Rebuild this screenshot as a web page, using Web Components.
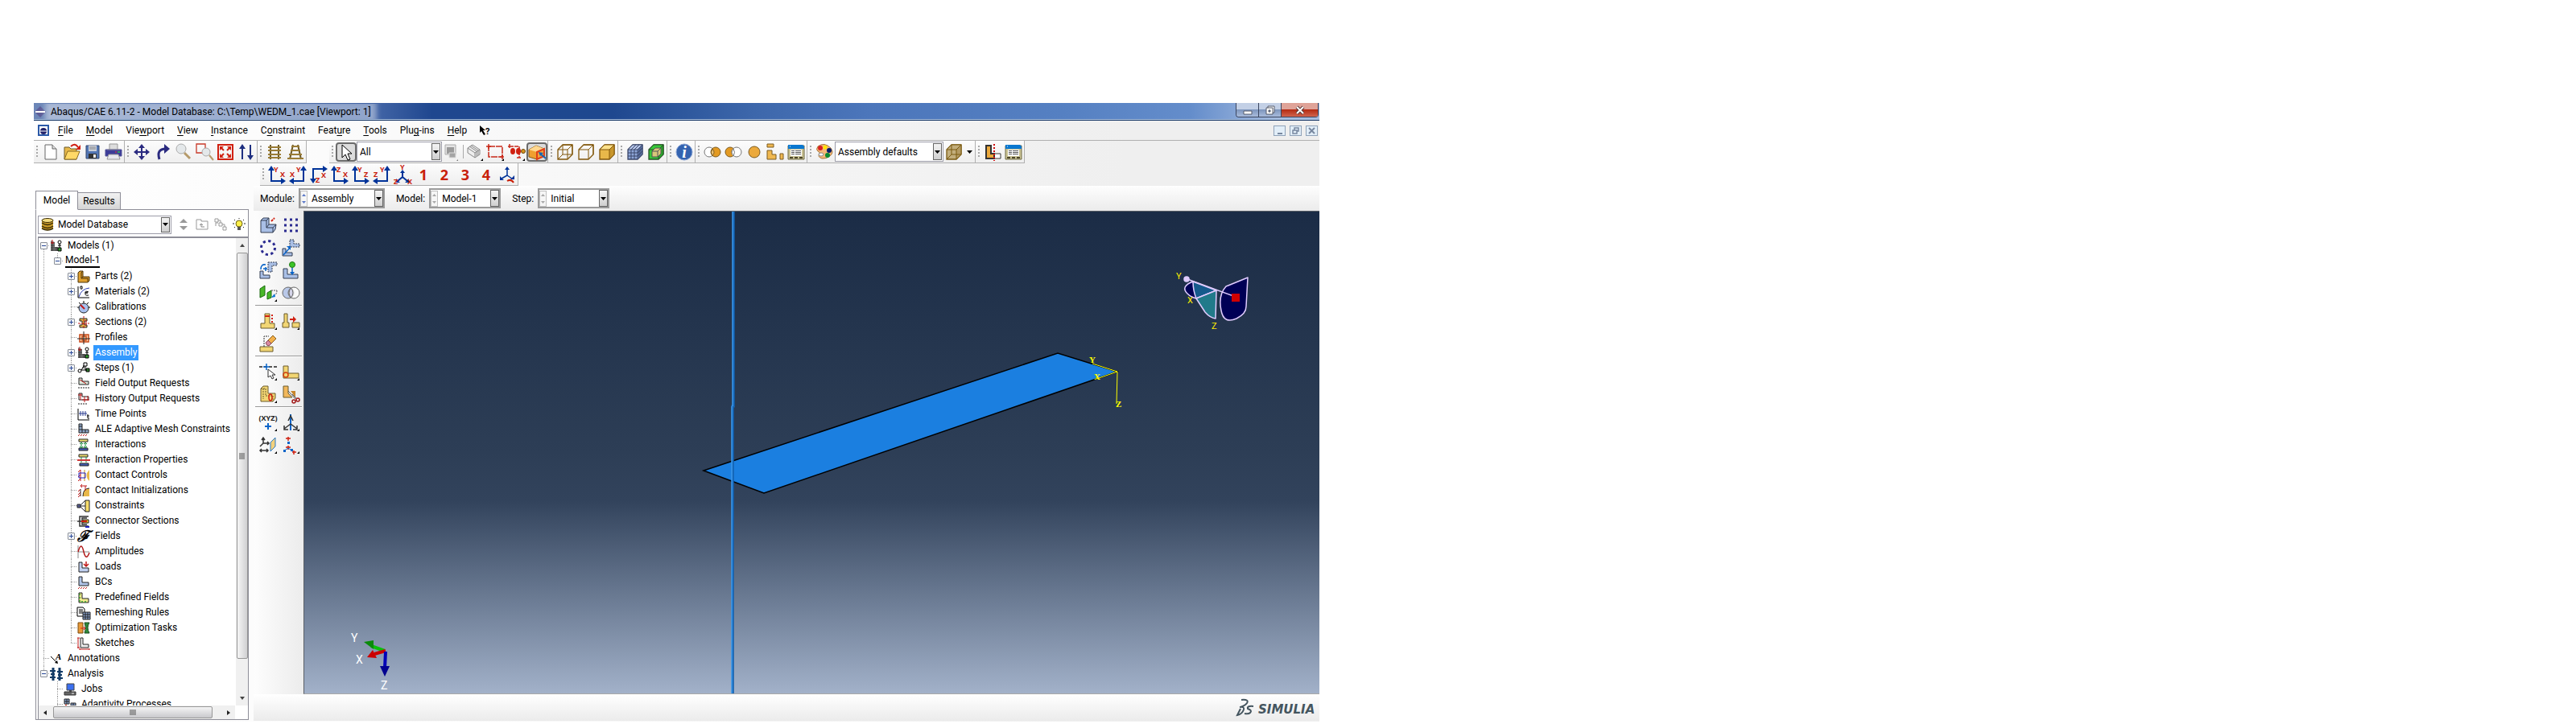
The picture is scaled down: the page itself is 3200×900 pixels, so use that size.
<!DOCTYPE html>
<html lang="en">
<head>
<meta charset="utf-8">
<title>Abaqus/CAE 6.11-2</title>
<style>
  body {
    margin: 0;
    padding: 128px 0 0 42px;
    box-sizing: border-box;
    height: 100vh;
    overflow: hidden;
    background: #fff;
    color: #000;
    font: 12px/16px Roboto, "Open Sans", sans-serif;
  }
</style>
</head>
<body>
<app-window></app-window>

<script>
// ---------- icon shapes ----------
const L_BLUE = 'fill="#a9bfe6" stroke="#333c50"';
const L_GOLD = 'fill="#f2d674" stroke="#6b5a2a"';
const MORE = '<path d="M22 19v3h-3z" fill="#000"/>';

const axes = (frame, head1, head2, a, ax, ay, b, bx, by) => `
  <path d="${frame}" fill="none" stroke="#003399" stroke-width="2"/>
  <path d="${head1}${head2}" fill="#003399"/>
  <text x="${ax}" y="${ay}" class="ax">${a}</text><text x="${bx}" y="${by}" class="ax">${b}</text>`;
const axesL = (a, b) => axes('M4 4v15h13', 'M0 6l4-6 4 6z', 'M16 15l6 4-6 4z', a, 7, 8, b, 15, 14);
const axesR = (a, b) => axes('M18 4v15H5', 'M14 6l4-6 4 6z', 'M6 15l-6 4 6 4z', a, 9, 8, b, 1, 14);
const digit = n => `<text x="11" y="18" text-anchor="middle" font-size="18" font-weight="700" fill="#c8200a">${n}</text>`;
const cube = (front, top, side, line, inner) => `
  <path d="M2 8l6-6h12v12l-6 6H2z" fill="${front}" stroke="${line}" stroke-width="1.3"/>
  <path d="M2 8l6-6h12l-6 6z" fill="${top}" stroke="${line}"/><path d="M14 8l6-6v12l-6 6z" fill="${side}" stroke="${line}"/>
  ${inner ? `<path d="M8 2v12h12M8 14l-6 6" fill="none" stroke="${line}"/>` : ''}`;
const assembly = `<path d="M1 1v13h9V9H6V3z" fill="#777"/><path d="M1 4h5M1 7h5M1 10h9M1 13h9M3 3v11M8 9v5" stroke="#222" stroke-width=".6"/>
  <path d="M3 0v5M1 3l2 2 2-2" stroke="#c01818" fill="none"/><circle cx="12" cy="3" r="2" fill="#fff" stroke="#000"/><path d="M12 5v5M10 7h4" stroke="#000"/><path d="M10 10h4v4h-4z" fill="#2e9a2e" stroke="#000"/>`;
const lShape = (fill, extra = '') => `<path d="M2 2h4v7h8v5H2z" fill="${fill}" stroke="#222"/>${extra}`;
const hatch = '<path d="M1 16l2-2M4 16l2-2M7 16l2-2M10 16l2-2" stroke="#c01818"/>';

const ICONS = {
  new: '<path d="M4 2h9l5 5v13H4z" fill="#fff" stroke="#666"/><path d="M13 2v5h5" fill="#ddd" stroke="#666"/>',
  open: '<path d="M2 20V5h6l2 2h7v13z" fill="#e8b94a" stroke="#6b5a2a"/><path d="M2 20l4-10h15l-4 10z" fill="#ffd967" stroke="#8a6a20"/><path d="M10 4q5-5 9 1" fill="none" stroke="#d01c10" stroke-width="2"/><path d="M22 2v6h-6z" fill="#d01c10"/>',
  save: '<path d="M3 3h16v16H3z" fill="#5276b4" stroke="#33476e"/><path d="M6 3h10v7H6z" fill="#c9ced8"/><path d="M7 5h8M7 7h8" stroke="#888"/><path d="M6 13h10v6H6z" fill="#333"/><path d="M12 14h3v4h-3z" fill="#eee"/>',
  print: '<path d="M6 1h10v8H6z" fill="#ddd" stroke="#999"/><path d="M1 8h20v8H1z" fill="#3c3c98" stroke="#55559a"/><path d="M3 8h16" stroke="#889"/><path d="M5 14h12l2 6H3z" fill="#e8e8ee" stroke="#999"/><path d="M16 11h3" stroke="#3f3"/><path d="M13 11h2" stroke="#f33"/>',
  pan: '<path d="M11 3v16M3 11h16" stroke="#2b2b80" stroke-width="2"/><path d="M11 1l4 5H7zM11 21l4-5H7zM1 11l5-4v8zM21 11l-5-4v8z" fill="#2b2b80"/>',
  rotate: '<path d="M7 20q-4-13 8-13" fill="none" stroke="#2b2b80" stroke-width="3"/><path d="M13 1l7 6-7 6z" fill="#2b2b80"/>',
  magnify: '<path d="M12 12l7 7" stroke="#b59a6a" stroke-width="3"/><circle cx="8" cy="7" r="6" fill="#e4e8ea" stroke="#aaa"/>',
  zoombox: '<path d="M1 1h11v11H1z" fill="none" stroke="#c83a2a" stroke-width="1.3"/><path d="M17 15l5 6" stroke="#b59a6a" stroke-width="2"/><circle cx="13" cy="11" r="5" fill="#e4e8ea" stroke="#aaa"/>',
  fit: '<path d="M2 2h18v18H2z" fill="none" stroke="#d02010" stroke-width="2"/><path d="M4 4h5L4 9zM18 4v5l-5-5zM4 18v-5l5 5zM18 18h-5l5-5z" fill="#d02010"/><path d="M5 5l4 4M17 5l-4 4M5 17l4-4M17 17l-4-4" stroke="#d02010" stroke-width="2"/>',
  updown: '<path d="M6 20V4M16 2v16" stroke="#1e2f80" stroke-width="2"/><path d="M6 1l4 6H2zM16 21l4-6h-8z" fill="#1e2f80"/>',
  ladder: '<path d="M6 2v18M16 2v18" stroke="#6b5a2a" stroke-width="2"/><path d="M3 5h16M3 9h16M3 14h16M3 18h16" stroke="#9a7c35" stroke-width="2"/>',
  ladder2: '<path d="M8 2L4 20M14 2l4 18" stroke="#6b5a2a" stroke-width="2"/><path d="M6 4h10M5 9h12M3 14h16M1 19h20" stroke="#9a7c35" stroke-width="2"/>',
  pointer: '<path d="M6 2v16l4-4 3 7 3-1-3-7h5z" fill="#fff" stroke="#000"/>',
  copy: '<path d="M2 2h13v12H2z" fill="#e4e4e4" stroke="#aaa"/><path d="M4 5h9v8H4z" fill="#9a9a9a"/><path d="M7 12h8v6H7z" fill="#a4a4a4" stroke="#ddd"/><path d="M18 20v2h-2z" fill="#777"/>',
  stack: '<path d="M3 6l6-4 9 6v6l-6 4-9-6z" fill="#eee" stroke="#888"/><path d="M3 6l9 6 6-4M12 12v6M5 4l9 6v6M7 3l9 6v6" fill="none" stroke="#888"/>' + MORE,
  redrect: '<path d="M3 4h17v13H3z" fill="none" stroke="#c82818" stroke-width="1.5" stroke-dasharray="8 1"/><path d="M0 4h6M3 1v6M17 17h5M20 14v6" stroke="#c82818" stroke-width="1.5"/>' + MORE,
  reddots: '<path d="M1 4h5M3 1v6M3 4h12v14M12 18h6" stroke="#c82818" fill="none" stroke-width="1.5" stroke-dasharray="5 1"/><ellipse cx="7" cy="10" rx="3" ry="4" fill="#d02010"/><ellipse cx="14" cy="10" rx="3" ry="4" fill="#d02010"/><circle cx="20" cy="10" r="2.5" fill="#d9941c" stroke="#6b4a10"/>' + MORE,
  pickbox: '<path d="M1 8l9-5 10 4v9l-9 4-10-3z" fill="#f0a030" stroke="#8a5a10"/><path d="M1 8l10 3 9-4-10-4z" fill="#ffd890"/><path d="M11 11v9l9-4V7z" fill="#f6a13a" stroke="#e0401a" stroke-width="2"/><path d="M22 19l-7-6" stroke="#1565b5" stroke-width="2"/><path d="M13 11l6 1-4 4z" fill="#1565b5"/>',
  wire: cube('none', 'none', 'none', '#80560a', true),
  hidden: cube('none', 'none', 'none', '#80560a', false),
  shaded: cube('#e8b84a', '#fbe08a', '#c8962c', '#80560a', false),
  mesh: cube('#8ea6d8', '#b4c4e8', '#6d88c2', '#3a4668', false) + '<path d="M6 8v12M10 8v12M2 12h12l6-6M2 16h12l6-6M6 8l6-6M10 8l6-6M16 6v12M18 4v12" fill="none" stroke="#3a4668"/>',
  cutcube: cube('#38c838', '#38c838', '#2aa82a', '#245024', false) + '<path d="M6 10l4-4h7v7l-4 4H6z" fill="#d9c77a" stroke="#555"/><path d="M6 10h7v7M13 10l4-4" fill="none" stroke="#555"/>',
  info: '<circle cx="11" cy="11" r="10" fill="#3463b0" stroke="#8aa4d4"/><text x="11" y="18" text-anchor="middle" font-family="Liberation Serif, serif" font-style="italic" font-weight="700" font-size="20" fill="#fff">i</text>',
  both: '<circle cx="7" cy="11" r="6" fill="#fff" stroke="#777"/><circle cx="15" cy="11" r="6" fill="#e39a22" stroke="#7a5a20"/><path d="M11 7q4 4 0 9q-3-5 0-9" fill="#f6c978" stroke="#7a5a20"/>',
  left: '<circle cx="7" cy="11" r="6" fill="#e39a22" stroke="#7a5a20"/><circle cx="15" cy="11" r="6" fill="#fff" stroke="#777"/><path d="M11 7q3 4 0 9q-4-5 0-9" fill="#fff" stroke="#777"/>',
  single: '<circle cx="11" cy="11" r="7" fill="#eba93c" stroke="#7a5a20"/>',
  pieces: '<path d="M1 1h8v4H1zM1 9h6v5h5v6H1zM17 13h4v7h-4z" fill="#f0b850" stroke="#7a5a20"/>',
  table: '<path d="M1 3h20v17H1z" fill="#c9c294" stroke="#6f6a45"/><path d="M1 2h18l2 2v3H1z" fill="#0a78d0"/><path d="M3 4h1" stroke="#fff"/><path d="M4 8h14v8H4z" fill="#fff"/><path d="M5 9.5h4M10 9.5h7M5 11.5h4M10 11.5h7M5 13.5h4M10 13.5h7" stroke="#555"/><path d="M3 18h4M9 18h4M15 18h4" stroke="#4b4427" stroke-width="2"/>',
  palette: '<path d="M3 4q8-6 16 2q4 5 0 9q-5 5-11 4q-6-2-3-6q1-2-2-3q-3-2 0-6z" fill="#f4b878" stroke="#a8783c"/><circle cx="6" cy="6" r="3" fill="#d82020"/><circle cx="12" cy="5" r="2.5" fill="#ffe600"/><circle cx="17" cy="9" r="3" fill="#001a66"/><circle cx="15" cy="15" r="3" fill="#0a8a30"/><ellipse cx="7" cy="14" rx="3" ry="2" fill="#fff" stroke="#888"/>',
  tancube: cube('#c2ae7c', '#c2ae7c', '#b39a62', '#7a5a10', true),
  partline: '<path d="M3 3h6v10h12v6H3z" fill="#fff" stroke="#333"/><path d="M3 3h6v10h4v6H3z" fill="#eba93c" stroke="#333" stroke-width="2"/><path d="M13 1v21" stroke="#d01010" stroke-width="2" stroke-dasharray="2 2"/>',
  xy: axesL('Y', 'X'), xyr: axesR('Y', 'X'),
  xz: axes('M4 18V4h15', 'M0 16l4 6 4-6z', 'M16 0l6 4-6 4z', 'Z', 7, 21, 'X', 14, 15),
  zx: axesL('Z', 'X'), yz: axesL('Y', 'Z'), zyr: axesR('Y', 'Z'),
  iso: '<path d="M11 6v8l-6 5M11 14l6 5" fill="none" stroke="#003399" stroke-width="2"/><path d="M8 9l3-4 3 4zM3 16v5h5zM19 16v5h-5z" fill="#003399"/><text x="8" y="5" class="ax">Y</text><text x="0" y="23" class="ax">Z</text><text x="17" y="23" class="ax">X</text>',
  n1: digit(1), n2: digit(2), n3: digit(3), n4: digit(4),
  isoturn: '<path d="M11 3v9l-7 4M11 12l6 4" fill="none" stroke="#003399" stroke-width="1.5"/><path d="M8 5l3-4 3 4zM2 13v5h5zM20 12v5h-5z" fill="#003399"/><path d="M11 19q5-3 8 2" fill="none" stroke="#c8200a" stroke-width="2"/>',
  // module toolbox
  instance: `<path d="M2 5l3-3h7v8h9l-1 6-3 4H2z" ${L_BLUE}/><path d="M2 5h7v9h8v6M9 5l3-3M9 14l3-4M17 14l4-4" fill="none" stroke="#333c50"/><path d="M15 6l4-4" stroke="#d02010" stroke-width="2" stroke-dasharray="3 1"/>`,
  grid: '<path d="M3 4h17M3 11h17M3 18h17" stroke="#2b2b90" stroke-width="3" stroke-dasharray="3 4"/>',
  radial: '<circle cx="11" cy="11" r="8.5" fill="none" stroke="#2b2b90" stroke-width="3" stroke-dasharray="3.2 3.47"/>',
  translate: `<path d="M1 12h4v5h8v4H1z" ${L_BLUE}/><path d="M10 1h5v5h7v4H10z" fill="#a9bfe6" stroke="#333c50" stroke-dasharray="2 1"/><path d="M2 20l8-9" stroke="#0a64c8" stroke-width="1.5"/><path d="M11 9v5l-5-5z" fill="#0a64c8"/>`,
  turn: `<path d="M1 12h4v5h8v4H1z" ${L_BLUE}/><path d="M11 1h11v4h-6v8h-5z" fill="#a9bfe6" stroke="#333c50" stroke-dasharray="2 1"/><path d="M2 10q0-7 6-6M8 7v5M5 9h5" fill="none" stroke="#0a64c8" stroke-width="1.5"/>`,
  toinstance: `<path d="M2 9h5v7h13v5H2z" ${L_BLUE}/><circle cx="13" cy="4" r="3.5" fill="#3cc428" stroke="#207818"/><path d="M13 8v7" stroke="#0a64c8" stroke-width="1.5"/><path d="M10 13h6l-3 4z" fill="#0a64c8"/>`,
  parallel: '<path d="M1 6l6-4v12l-6 3z" fill="#48b828" stroke="#1c6a10"/><path d="M10 11l5-3v9l-5 2z" fill="#48b828" stroke="#1c6a10"/><path d="M15 8h7M22 8q0 6-6 8" fill="none" stroke="#555" stroke-dasharray="2 1"/><path d="M15 17l4-5 1 4z" fill="#0a78d8"/>' + MORE,
  merge: '<circle cx="8" cy="11" r="7" fill="#b9c8e8" stroke="#666"/><circle cx="15" cy="11" r="7" fill="#fff" fill-opacity=".7" stroke="#666"/><path d="M11.5 5q5 6 0 12q-5-6 0-12" fill="#d5d5ea" stroke="#666"/>',
  feature: `<path d="M7 2h6v12h6v6H2v-6h5z" ${L_GOLD}/><path d="M7 5h6" stroke="#d02010" stroke-width="2"/><path d="M16 3v11" stroke="#d02010" stroke-width="2" stroke-dasharray="2 2"/>` + MORE,
  split: `<path d="M3 2h4v11h2v6H1v-6h2zM13 13h9v6h-9z" ${L_GOLD}/><path d="M10 9h5" stroke="#d02010" stroke-width="2"/><path d="M14 5l4 4-4 4z" fill="#d02010"/>` + MORE,
  erase: `<path d="M1 15h16v6H1z" ${L_GOLD}/><path d="M6 15V2h6" fill="none" stroke="#333" stroke-dasharray="2 1"/><path d="M9 9l8-8 4 4-8 8z" fill="#f2b04c" stroke="#8a6020"/><path d="M8 10l3-3 4 4-3 3q-3 0-4-4z" fill="#d88aa0" stroke="#8a4a5a"/>`,
  datum: '<path d="M0 5h22" stroke="#222" stroke-width="1.5" stroke-dasharray="4 2"/><path d="M9 1v8M5 5h8" stroke="#0a64c8" stroke-width="1.5"/><path d="M11 8v10l3-2 2 4 2-1-2-4h4z" fill="#fff" stroke="#333"/>' + MORE,
  partition: `<path d="M2 4h6v9h13v6H2z" ${L_GOLD}/><circle cx="5" cy="15" r="3" fill="none" stroke="#d04010" stroke-width="1.5"/>` + MORE,
  partcell: `<path d="M2 4l3-3h6v9h9v6l-3 4H2z" ${L_GOLD}/><path d="M2 4h6v9h9v7M5 4v13" fill="none" stroke="#6b5a2a" stroke-dasharray="2 1"/><ellipse cx="14" cy="15" rx="2" ry="4" fill="none" stroke="#d02010" stroke-width="1.5"/>` + MORE,
  trim: `<path d="M2 1h6v9l5 5H2z" fill="#f2b85c" stroke="#6b5a2a"/><path d="M11 7h6v8z" fill="#c8862c"/><path d="M8 7l9 10M13 11l6 6" stroke="#555"/><circle cx="15" cy="20" r="2" fill="none" stroke="#a01818" stroke-width="1.5"/><circle cx="20" cy="18" r="2" fill="none" stroke="#a01818" stroke-width="1.5"/>`,
  xyz: '<text x="11" y="9" text-anchor="middle" font-size="9" font-weight="700" fill="#222">(XYZ)</text><path d="M11 12v8M7 16h8" stroke="#0a64c8" stroke-width="2"/>' + MORE,
  triad: '<path d="M11 1v20" stroke="#0a64c8" stroke-width="2"/><path d="M11 13l-8 6M11 13l8 6M8 9l3-6 3 6M3 15v5h5M19 15v5h-5" fill="none" stroke="#333" stroke-width="1.5"/>' + MORE,
  plane: '<path d="M5 3v6h7M5 9l-4 4M3 5l2-3 2 3M10 7l2 2-2 2M1 18h10M3 16l-2 2 2 2M9 16l2 2-2 2" fill="none" stroke="#333" stroke-width="1.5"/><path d="M14 8l6-6v11l-6 6z" fill="#f2d07c" stroke="#2a7ac8"/>' + MORE,
  points: '<path d="M8 1v5M5 3h6M8 12v5M5 14h6M15 18v5M13 20h5" stroke="#d02010" stroke-width="1.5"/><path d="M7 7h3v3H7zM2 17h3v3H2zM11 16h3v3h-3z" fill="#0a64c8"/><path d="M8 15l-6 4M8 15l6 4" stroke="#0a64c8"/>' + MORE,
};

// tree icons sit on a 16 px grid
const TREE_ICONS = {
  models: assembly, assembly,
  parts: '<path d="M1 3l2-2h4v7h8v5l-2 2H1z" fill="#dfa030" stroke="#4a3208"/><path d="M5 3v7h8v4M5 3l2-2M5 10l2-2" fill="none" stroke="#4a3208"/>',
  materials: '<path d="M1 1v14h14" fill="none" stroke="#000"/><path d="M2 14q3-10 13-11" fill="none" stroke="#2a3cb0"/><path d="M6 1H4q-1 4 2 3z" fill="none" stroke="#000"/><path d="M14 8q-5-2-4 1h3h-3q-1 4 4 3" fill="none" stroke="#000"/>',
  calibrations: '<path d="M8 0v3M0 8h3M13 8h3M2 2l2 2M14 2l-2 2" stroke="#000"/><circle cx="8" cy="9" r="6" fill="#a8c0ee" stroke="#222"/><path d="M4 5l5 5" stroke="#c01818" stroke-width="2"/>',
  sections: '<path d="M3 3h9v3H9v5h3v3H3v-3h3V6H3z" fill="#e8b84a" stroke="#222"/><path d="M8 0v16M1 9h14M11 5v8" stroke="#c01818" stroke-dasharray="3 1"/>',
  profiles: '<path d="M3 4h11v9H3zM6 6h5v5H6z" fill="#ffd8b0" stroke="#c84818" stroke-width="1.5"/><path d="M8 0v16M0 9h16" stroke="#222"/>',
  steps: '<path d="M5 10h6M8 8V4" stroke="#000"/><circle cx="3" cy="11" r="2" fill="#fff" stroke="#000"/><path d="M8 1h4v4H8z" fill="#fff" stroke="#000"/><path d="M11 8h4v4h-4z" fill="#2e7a2e" stroke="#000"/><path d="M5 10l3-5M10 5v5h2" fill="none" stroke="#000"/>',
  fieldout: '<path d="M2 1v8h12V5H6V1z" fill="#dce8dc" stroke="#222"/><path d="M3 3l8 5" stroke="#c01818"/><path d="M2 12v3M5 12v3M8 12v3M11 12v3M14 12v3" stroke="#222" stroke-dasharray="2 1"/>',
  histout: '<path d="M2 1v8h12V5H6V1z" fill="#fff" stroke="#222"/><path d="M1 3h5M4 1v8M9 5v7M6 9h9M13 4v6" stroke="#c01818"/><path d="M2 13v3M5 13v3M8 13v3M11 13v3" stroke="#222" stroke-dasharray="2 1"/>',
  time: '<path d="M1 1v14h14" fill="none" stroke="#000"/><path d="M2 7h10M4 4v6M7 4v6M10 4v6" stroke="#2a3c90"/><path d="M13 8v5h2M12 10h3" fill="none" stroke="#000"/>',
  ale: '<path d="M2 1h4v7h8v4H2z" fill="#8ea6c8" stroke="#222"/><path d="M2 4h4M2 8h4M6 8v4M10 8v4" stroke="#222"/>' + hatch,
  interactions: '<path d="M2 1h11v3H2z" fill="#f2e070" stroke="#222"/><path d="M2 12h11v3H2z" fill="#445cb0" stroke="#222"/><path d="M5 5v6M10 5v6M3 7l2-2 2 2M8 7l2-2 2 2M3 10l2 2 2-2M8 10l2 2 2-2" fill="none" stroke="#1a8a3a"/>',
  intprops: '<path d="M2 1h11v3H2z" fill="#f2e070" stroke="#222"/><path d="M3 12h11v3H3z" fill="#445cb0" stroke="#222"/><path d="M5 4v7M11 4v7" stroke="#1a8a3a"/><path d="M0 8h16" stroke="#d03838" stroke-width="2"/>',
  ctrl: '<path d="M15 1q-7 7 0 14z" fill="#e8b84a"/><path d="M9 1v14" stroke="#c89020"/><path d="M1 4l3-3M1 10l3-3M1 15l3-3M4 1v14" stroke="#c01818"/><path d="M2 5h8v6H2z" fill="none" stroke="#2020c0"/>',
  init: '<path d="M15 5q-8 0-8 10h8z" fill="#e8b84a"/><path d="M15 5q-8 0-8 10" fill="none" stroke="#222"/><path d="M4 6v9" stroke="#222"/><path d="M1 9l3-3M1 13l3-3M1 16l3-3M4 2h8M6 0L4 2l2 2M10 2v6" fill="none" stroke="#c01818"/>',
  constraints: '<path d="M10 1h5v14h-5z" fill="#f6dc6a" stroke="#222"/><path d="M3 8l7-7M3 8l7 7M3 8h7" stroke="#222"/><path d="M0 6h4v4H0z" fill="#555c90" stroke="#222"/>',
  connector: '<path d="M14 2H3v12h11M0 8h5M12 4H6v8h6" fill="none" stroke="#333" stroke-width="1.5"/><path d="M7 6h7v4H7z" fill="#e8c030" stroke="#222"/><path d="M5 8h7" stroke="#d02010" stroke-width="2"/><path d="M10 15h5" stroke="#2020c0" stroke-width="2"/>',
  fields: '<text x="8" y="14" text-anchor="middle" font-family="Liberation Serif, serif" font-style="italic" font-weight="700" font-size="19">ℱ</text>',
  amplitudes: '<path d="M1 0v16M1 8h14" stroke="#888"/><path d="M1 8q4-14 7 0q3 12 7 1" fill="none" stroke="#b01818" stroke-width="1.5"/>',
  loads: lShape('#c0d0f0', '<path d="M11 1v6M8 4l3 3 3-3" fill="none" stroke="#c01818" stroke-width="1.5"/>'),
  bcs: '<path d="M2 1h4v7h8v4H2z" fill="#b0c4e8" stroke="#222"/>' + hatch,
  predefined: lShape('#f2ea90', '<path d="M3 3v10h10" fill="none" stroke="#2e9a2e" stroke-width="1.5" stroke-dasharray="2 2"/>'),
  remesh: '<path d="M0 1h7l2 2v9H0z" fill="#fff" stroke="#000"/><path d="M2 4h5M2 6h5M2 8h5" stroke="#000"/><path d="M7 7h9v9H7z" fill="#8aa4d0" stroke="#222"/><path d="M10 7v9M13 7v9M7 10h9M7 13h9" stroke="#222"/>',
  optimize: '<path d="M1 1h6v13H1z" fill="#e89a38" stroke="#7a4a10"/><path d="M9 1h6q-4 6 0 13H9q3-6 0-13z" fill="#2e8a3a" stroke="#184a20"/><path d="M4 8h6M8 6l2 2-2 2" stroke="#d02010" fill="none"/>',
  sketches: '<path d="M4 1h3v8h7v4H4z" fill="#eee" stroke="#222"/><path d="M1 1v13M0 1h3M0 13h3M3 15h12M3 14v2M15 14v2" stroke="#c01818"/>',
  annotations: '<path d="M1 5l8 8" stroke="#000"/><path d="M10 14l-4-1 3-3z"/><text x="7" y="9" font-family="Liberation Serif, serif" font-style="italic" font-weight="700" font-size="11">A</text>',
  analysis: '<path d="M0 4h7M0 12h7M9 5h7M9 13h7" stroke="#123a66" stroke-width="2"/><path d="M4 0v16M12 0v16" stroke="#123a66" stroke-width="3"/><path d="M1 8h5M10 9h5" stroke="#123a66" stroke-width="2"/>',
  jobs: '<path d="M4 1h9v8H4z" fill="#3c70f0" stroke="#444"/><path d="M1 11h14v4H1z" fill="#666" stroke="#333"/><path d="M7 9h3v2H7z" fill="#444"/><path d="M10 13h3" stroke="#eee"/>',
  adaptivity: '<path d="M1 1h6v6H1zM9 6h6v6H9z" fill="#8aa4d0" stroke="#222"/><path d="M4 1v6M1 4h6M12 6v6M9 9h6" stroke="#222"/><path d="M3 8v6" stroke="#d02010" stroke-width="2"/>',
};

function define(name, html) {
  const tpl = document.createElement('template');
  customElements.define(name, class extends HTMLElement {
    connectedCallback() {
      if (this.shadowRoot) return;
      tpl.innerHTML = typeof html === 'function' ? html(this) : html;
      this.attachShadow({ mode: 'open' }).appendChild(tpl.content.cloneNode(true));
    }
  });
}

define('tool-button', el => {
  const name = el.getAttribute('icon');
  return `
  <style>
    :host { display: block; flex: 0 0 26px; }
    :host([cell]) { flex-basis: 28px; }
    button { display: flex; align-items: center; justify-content: center; box-sizing: border-box; width: 100%; height: 26px; margin: 0; padding: 0; border: 0; background: none; }
    :host([cell]) button { height: 28px; }
    :host([pressed]) button { border: 2px solid #6b6b6b; border-radius: 4px; background: #dcdcdc; height: 24px; }
    svg { flex: none; width: 22px; height: 22px; overflow: visible; font-family: "Open Sans", sans-serif; }
    .ax { fill: #c8200a; font-size: 9px; font-weight: 700; }
  </style>
  <button type="button" aria-label="${name}" aria-pressed="${el.hasAttribute('pressed')}"><svg viewBox="0 0 22 22">${ICONS[name]}</svg></button>`;
});

define('tool-group', `
  <style>
    :host { display: flex; align-items: center; height: 27px; border-right: 1px solid #b0b0b0; border-bottom: 1px solid #b0b0b0; background: linear-gradient(#fcfcfc, #efefef); }
    .grip { flex: 0 0 8px; height: 15px; background: repeating-linear-gradient(#a8a8a8 0 2px, transparent 2px 4px) 3px 0 / 2px 100% no-repeat; }
  </style>
  <span class="grip"></span><slot></slot>`);

define('combo-box', el => `
  <style>
    :host { display: flex; box-sizing: border-box; align-items: center; height: 25px; border: 1px solid #9c9ca8; background: #fff; padding: 1px; gap: 3px; }
    :host([framed]) { border: 2px solid #9a9a9a; padding: 0; }
    .field { flex: 1; display: flex; min-width: 0; height: 100%; }
    select { flex: 1; min-width: 0; height: 100%; padding: 0 12px 0 2px; border: 0; appearance: none; background: transparent; font: inherit; color: #000; outline: 0; }
    .drop { flex: 0 0 9px; margin-left: -11px; border: 1px solid #666; background: linear-gradient(#f4f4f4, #cfcfcf); display: flex; align-items: center; justify-content: center; pointer-events: none; }
    .spin { flex: 0 0 7px; height: 18px; border: 1px solid #c0c0c0; display: flex; flex-direction: column; justify-content: space-around; align-items: center; background: #f6f6f6; color: #a8a8a8; }
    .spin[data-on] { color: #5a78c8; }
    svg { display: block; }
    .db { margin-left: 2px; flex: none; }
  </style>
  ${el.hasAttribute('spin') ? `<span class="spin" ${el.getAttribute('spin') ? 'data-on' : ''}>
    <svg width="5" height="3"><path d="M0 3h5L2.5 0z" fill="currentColor"/></svg><svg width="5" height="3"><path d="M0 0h5L2.5 3z" fill="currentColor"/></svg></span>` : ''}
  ${el.hasAttribute('db') ? `<svg class="db" width="16" height="16" viewBox="0 0 16 16"><path d="M1 3v10q7 5 14 0V3z" fill="#c89a28"/><path d="M1 6q7 5 14 0M1 10q7 5 14 0M1 13q7 4 14 0" fill="none" stroke="#3a2c08" stroke-width="1.5"/><ellipse cx="8" cy="3" rx="7" ry="2.5" fill="#f4dc80" stroke="#3a2c08"/></svg>` : ''}
  <span class="field"><select aria-label="${el.getAttribute('label')}"><option>${el.getAttribute('value')}</option></select>
  <span class="drop"><svg width="7" height="4"><path d="M0 0h7L3.5 4z"/></svg></span></span>`);

define('title-bar', `
  <style>
    :host { display: flex; align-items: flex-start; height: 21px; border-bottom: 1px solid #1b3a68; box-shadow: inset 0 -1px #a9c0de;
      background: linear-gradient(90deg, #6d87b8 0, #5d7ab2 10%, #3f62a4 27%, #1f478f 31%, #1f488f 45%, #3d67ab 56%, #4c76bb 65%, #5580c2 80%, #648dcb 90%, #a7bde0 97%); }
    .logo { flex: none; margin: 4px 0 0 1px; }
    h1 { margin: 3px auto 0 4px; padding: 0 2px; font-size: 12px; font-weight: 400; line-height: 16px; white-space: nowrap; background: rgba(255,255,255,.42); box-shadow: 0 0 6px 5px rgba(255,255,255,.42); clip-path: inset(-2px -12px -1px -12px); }
    .ctl { display: flex; height: 17px; border: 1px solid #3b4660; border-top: 0; border-right: 0; border-radius: 0 0 4px 4px; overflow: hidden; margin-right: 1px; }
    button { display: flex; align-items: center; justify-content: center; width: 28px; padding: 0; border: 0; border-right: 1px solid #3b4660; background: linear-gradient(#c3d0e6 0 45%, #7e96bd 50%, #a9bcdc); }
    .close { width: 46px; background: linear-gradient(#dfa398 0 45%, #b52c14 50%, #d0644e); }
  </style>
  <svg class="logo" width="14" height="14" viewBox="0 0 14 14"><path d="M7 0l7 7-7 7-7-7z" fill="#5c5c98"/><path d="M1 7h12" stroke="#fff" stroke-width="2"/></svg>
  <h1>Abaqus/CAE 6.11-2 - Model Database: C:\\Temp\\WEDM_1.cae [Viewport: 1]</h1>
  <div class="ctl">
    <button type="button" aria-label="Minimize"><svg width="12" height="12"><path d="M1 7h10v4H1z" fill="#fff" stroke="#555a6a"/></svg></button>
    <button type="button" aria-label="Restore"><svg width="12" height="12"><path d="M3 1h8v8H3z" fill="#fff" stroke="#555a6a"/><path d="M1 3h8v8H1z" fill="#fff" stroke="#555a6a"/><path d="M4 6h2v2H4z" fill="#7e96bd" stroke="#555a6a"/></svg></button>
    <button type="button" class="close" aria-label="Close"><svg width="12" height="12"><path d="M2 2l8 8M10 2l-8 8" stroke="#5a3a3a" stroke-width="4"/><path d="M2 2l8 8M10 2l-8 8" stroke="#fff" stroke-width="2"/></svg></button>
  </div>`);

define('menu-bar', `
  <style>
    :host { display: flex; align-items: center; height: 24px; border-bottom: 1px solid #b0b0b0; padding-left: 5px; }
    nav { display: flex; gap: 16px; margin: 0 16px 0 11px; }
    button { margin: 0; padding: 0; border: 0; background: none; font: inherit; color: inherit; }
    u { text-underline-offset: 2px; }
    .mdi { display: flex; gap: 5px; margin: 0 2px 0 auto; }
    .mdi button { display: flex; box-sizing: border-box; width: 15px; height: 13px; border: 1px solid #8fa2b8; background: #e2eef8; align-items: center; justify-content: center; }
  </style>
  <svg width="14" height="14"><path d="M1 1h12v12H1z" fill="#fff" stroke="#2c5aa8" stroke-width="2"/><circle cx="7" cy="8" r="4" fill="#22226a"/><path d="M3 8h8" stroke="#fff"/></svg>
  <nav>
    <button type="button"><u>F</u>ile</button><button type="button"><u>M</u>odel</button><button type="button">Vie<u>w</u>port</button><button type="button"><u>V</u>iew</button><button type="button"><u>I</u>nstance</button><button type="button">C<u>o</u>nstraint</button><button type="button">Feat<u>u</u>re</button><button type="button"><u>T</u>ools</button><button type="button">Plu<u>g</u>-ins</button><button type="button"><u>H</u>elp</button>
  </nav>
  <svg width="13" height="13"><path d="M0 0v9l2-2 3 5 2-1-3-5h3z"/><text x="7" y="11" font-size="11" font-weight="700">?</text></svg>
  <div class="mdi">
    <button type="button" aria-label="Minimize viewport"><svg width="9" height="9"><path d="M2 8h6" stroke="#7888a0" stroke-width="2"/></svg></button>
    <button type="button" aria-label="Restore viewport"><svg width="9" height="9"><path d="M3 4V1h5v4H6M1 4h5v4H1z" fill="none" stroke="#7888a0" stroke-width="1.5"/></svg></button>
    <button type="button" aria-label="Close viewport"><svg width="9" height="9"><path d="M1 1l7 7M8 1l-7 7" stroke="#7888a0" stroke-width="2"/></svg></button>
  </div>`);

const buttons = (names, attr = '') => names.split(' ').map(n => `<tool-button icon="${n}" ${attr}></tool-button>`).join('');

define('tool-bars', `
  <style>
    :host { display: flex; flex-direction: column; }
    .row { display: flex; height: 28px; }
    .second { padding-left: 281px; }
    .gap { flex: 0 0 28px; }
    .all { flex: 0 0 106px; } .colors { flex: 0 0 135px; }
    .bar { flex: 0 0 1px; height: 17px; background: #aaa; }
    .arrow { display: flex; justify-content: center; width: 13px; padding: 0; border: 0; background: none; }
  </style>
  <div class="row">
    <tool-group>${buttons('new open save print')}</tool-group>
    <tool-group>${buttons('pan rotate magnify zoombox fit updown')}</tool-group>
    <tool-group>${buttons('ladder ladder2')}</tool-group>
    <span class="gap"></span>
    <tool-group><tool-button icon="pointer" pressed></tool-button><combo-box class="all" label="Selection filter" value="All"></combo-box>${buttons('copy')}<span class="bar"></span>${buttons('stack redrect reddots')}<tool-button icon="pickbox" pressed></tool-button></tool-group>
    <tool-group>${buttons('wire hidden shaded')}</tool-group>
    <tool-group>${buttons('mesh cutcube')}</tool-group>
    <tool-group>${buttons('info')}</tool-group>
    <tool-group>${buttons('both left single pieces table')}</tool-group>
    <tool-group>${buttons('palette')}<combo-box class="colors" label="Color code" value="Assembly defaults"></combo-box>${buttons('tancube')}<button class="arrow" type="button" aria-label="Translucency"><svg width="7" height="4"><path d="M0 0h7L3.5 4z"/></svg></button></tool-group>
    <tool-group>${buttons('partline table')}</tool-group>
  </div>
  <div class="row second"><tool-group>${buttons('xy xyr xz zx yz zyr iso n1 n2 n3 n4 isoturn')}</tool-group></div>`);

define('context-bar', `
  <style>
    :host { display: flex; align-items: center; height: 31px; padding-left: 8px; background: linear-gradient(#fefefe, #ebebeb); }
    label { display: flex; align-items: center; gap: 5px; margin-right: 14px; }
    .module { width: 107px; } .short { width: 89px; }
  </style>
  <label>Module: <combo-box class="module" framed spin="on" label="Module" value="Assembly"></combo-box></label>
  <label>Model: <combo-box class="short" framed spin label="Model" value="Model-1"></combo-box></label>
  <label>Step: <combo-box class="short" framed spin label="Step" value="Initial"></combo-box></label>`);

define('tree-item', el => {
  const icon = el.getAttribute('icon');
  const box = el.getAttribute('box');
  return `
  <style>
    :host { display: block; background: repeating-linear-gradient(#999 0 1px, transparent 1px 2px) 6px 0 / 1px 100% no-repeat; }
    :host([first]) { background-position: 6px 10px; }
    :host([last]) { background-size: 1px 10px; }
    .row { display: flex; align-items: center; height: 19px; background: repeating-linear-gradient(90deg, #999 0 1px, transparent 1px 2px) 6px 9px / 7px 1px no-repeat; }
    .cell { flex: 0 0 14px; display: flex; align-items: center; padding-left: 2px; box-sizing: border-box; }
    .box { width: 9px; height: 9px; padding: 0; border: 1px solid #8a8f98; border-radius: 1px;
      background: linear-gradient(#2c4a9a, #2c4a9a) center / 5px 1px no-repeat, linear-gradient(#2c4a9a, #2c4a9a) center / 1px var(--tall, 5px) no-repeat, #f4f6f8; }
    svg { flex: none; width: 16px; height: 16px; overflow: visible; margin-right: 4px; }
    .label { padding: 0 2px; line-height: 19px; white-space: nowrap; }
    :host([selected]) .label { background: #3399ff; color: #fff; }
    :host([current]) .label { padding: 0; margin-left: 2px; line-height: 15px; border-bottom: 2px solid #000; }
    .kids { padding-left: 17px; }
  </style>
  <div class="row" ${box === '-' ? 'style="--tall: 1px"' : ''}><span class="cell">${box ? `<button class="box" type="button" aria-label="${box === '-' ? 'Collapse' : 'Expand'}"></button>` : ''}</span>
    ${icon ? `<svg viewBox="0 0 16 16">${TREE_ICONS[icon]}</svg>` : ''}<span class="label">${el.getAttribute('label')}</span></div>
  <div class="kids"><slot></slot></div>`;
});

const leaf = ([icon, label, extra = '']) => `<tree-item icon="${icon}" label="${label}" ${extra}></tree-item>`;
const modelLeaves = [
  ['parts', 'Parts (2)', 'box="+"'], ['materials', 'Materials (2)', 'box="+"'], ['calibrations', 'Calibrations'],
  ['sections', 'Sections (2)', 'box="+"'], ['profiles', 'Profiles'], ['assembly', 'Assembly', 'box="+" selected'],
  ['steps', 'Steps (1)', 'box="+"'], ['fieldout', 'Field Output Requests'], ['histout', 'History Output Requests'],
  ['time', 'Time Points'], ['ale', 'ALE Adaptive Mesh Constraints'], ['interactions', 'Interactions'],
  ['intprops', 'Interaction Properties'], ['ctrl', 'Contact Controls'], ['init', 'Contact Initializations'],
  ['constraints', 'Constraints'], ['connector', 'Connector Sections'], ['fields', 'Fields', 'box="+"'],
  ['amplitudes', 'Amplitudes'], ['loads', 'Loads'], ['bcs', 'BCs'], ['predefined', 'Predefined Fields'],
  ['remesh', 'Remeshing Rules'], ['optimize', 'Optimization Tasks'], ['sketches', 'Sketches', 'last'],
];

define('side-panel', `
  <style>
    :host { display: flex; flex-direction: column; min-height: 0; }
    .tabs { display: flex; align-items: flex-end; height: 24px; }
    .tabs button { box-sizing: border-box; margin: 0; padding: 0; border: 1px solid #8e8e98; font: inherit; color: inherit; }
    .tabs .on { width: 53px; height: 24px; background: #fff; border-bottom-color: #fff; }
    .tabs .off { width: 53px; height: 22px; border-left: 0; background: linear-gradient(#f2f2f2, #d4d4d4); }
    .fill { flex: 1; border-bottom: 1px solid #8e8e98; }
    .panel { flex: 1; display: flex; flex-direction: column; min-height: 0; border: 1px solid #8e8e98; border-top: 0; background: #fff; padding: 6px 0 0 2px; }
    .pick { display: flex; align-items: center; height: 24px; margin-bottom: 3px; }
    .pick combo-box { width: 166px; height: 23px; margin-right: 4px; }
    .pick button { display: flex; flex: 1; justify-content: center; padding: 0; border: 0; background: none; }
    .box { flex: 1; display: flex; flex-direction: column; min-height: 0; border: 1px solid #8e8e98; border-width: 2px 0 0 1px; }
    .view { flex: 1; display: flex; min-height: 0; }
    .tree { flex: 1; overflow: hidden; }
    .v, .h { display: flex; align-items: center; justify-content: space-between; background: #f0f0f0; box-sizing: border-box; }
    .v { flex: 0 0 15px; flex-direction: column; padding: 7px 0; }
    .h { flex: 0 0 17px; padding: 0 6px; margin-right: 16px; }
    .thumb { display: flex; align-items: center; justify-content: center; box-sizing: border-box; border: 1px solid #979797; border-radius: 2px; }
    .v .thumb { width: 14px; flex: 0 1 505px; margin: 7px 0 auto; background: linear-gradient(90deg, #f5f5f5, #d0d0d2); }
    .h .thumb { height: 15px; flex: 0 1 198px; margin: 0 auto 0 8px; background: linear-gradient(#f5f5f5, #c8c8cc); }
  </style>
  <div class="tabs"><button class="on" type="button">Model</button><button class="off" type="button">Results</button><span class="fill"></span></div>
  <div class="panel">
    <div class="pick">
      <combo-box db label="Tree root" value="Model Database"></combo-box>
      <button type="button" aria-label="Move"><svg width="10" height="16"><path d="M0 6h10L5 1zM0 10h10l-5 5z" fill="#999"/></svg></button>
      <button type="button" aria-label="Up one level"><svg width="16" height="14"><path d="M1 3V1h6v2h8v10H1z" fill="none" stroke="#999"/><path d="M7 6v4h4M5 8l2-2 2 2" fill="none" stroke="#888"/></svg></button>
      <button type="button" aria-label="Link"><svg width="16" height="16"><path d="M1 1h4v4H1zM6 6h4v4H6zM11 11h4v4h-4zM5 3h3v3M2 10V6h3M10 8h3v3" fill="none" stroke="#999"/></svg></button>
      <button type="button" aria-label="Tips"><svg width="16" height="16"><path d="M8 0v1M2 2l1 1M14 2l-1 1M0 7h2M14 7h2M2 12l1-1M14 12l-1-1" stroke="#222"/><circle cx="8" cy="7" r="4" fill="#fff04a" stroke="#6b6010"/><path d="M6 11h4v4H6z" fill="#555"/></svg></button>
    </div>
    <div class="box">
      <div class="view">
        <div class="tree">
          <tree-item icon="models" label="Models (1)" box="-" first>
            <tree-item label="Model-1" box="-" current last>${modelLeaves.map(leaf).join('')}</tree-item>
          </tree-item>
          <tree-item icon="annotations" label="Annotations"></tree-item>
          <tree-item icon="analysis" label="Analysis" box="-" last>
            <tree-item icon="jobs" label="Jobs"></tree-item>
            <tree-item icon="adaptivity" label="Adaptivity Processes"></tree-item>
          </tree-item>
        </div>
        <div class="v"><svg width="6" height="4"><path d="M0 4h6L3 0z" fill="#444"/></svg>
          <span class="thumb"><svg width="7" height="8"><path d="M0 1h7M0 3h7M0 5h7M0 7h7" stroke="#555"/></svg></span>
          <svg width="6" height="4"><path d="M0 0h6L3 4z" fill="#444"/></svg></div>
      </div>
      <div class="h"><svg width="4" height="6"><path d="M4 0v6L0 3z" fill="#222"/></svg>
        <span class="thumb"><svg width="8" height="7"><path d="M1 0v7M3 0v7M5 0v7M7 0v7" stroke="#555"/></svg></span>
        <svg width="4" height="6"><path d="M0 0v6l4-3z" fill="#222"/></svg></div>
    </div>
  </div>`);

define('tool-palette', `
  <style>
    :host { display: block; padding-top: 4px; background: linear-gradient(90deg, #fdfdfd, #ececec); }
    .set { display: flex; flex-wrap: wrap; padding: 0 2px 0 4px; }
    hr { height: 1px; margin: 1px 2px 5px; border: 0; background: #999; box-shadow: 0 1px #fff; }
  </style>
  <div class="set">${buttons('instance grid radial translate turn toinstance parallel merge', 'cell')}</div><hr>
  <div class="set">${buttons('feature split erase', 'cell')}</div><hr>
  <div class="set">${buttons('datum partition partcell trim', 'cell')}</div><hr>
  <div class="set">${buttons('xyz triad plane points', 'cell')}</div>`);

define('view-port', `
  <style>
    :host { display: block; min-width: 0; min-height: 0; overflow: hidden; border: 1px solid #5a5f66; border-right: 0; border-bottom-color: #a8a8a8;
      background: linear-gradient(#1b2c46, #2d3e56 50%, #32435c 60%, #a2b1c9); }
    svg { display: block; width: 100%; height: 100%; }
    .yellow { fill: #ffee00; font-size: 11px; }
    .world { fill: #fff; font-size: 14px; }
    .csys { fill: #ffff00; font: 700 11px "Liberation Serif", serif; }
  </style>
  <svg viewBox="0 0 1261 599" preserveAspectRatio="xMinYMin slice">
    <path d="M496 322L936 176l74 23-439 151z" fill="#1b7fe0" stroke="#000" stroke-width="1.5"/>
    <path d="M533 0v242h-1v357" fill="none" stroke="#1b78d4" stroke-width="3"/>
    <path d="M534 0v242M533 242v357" stroke="#0f559c"/>
    <path d="M532 0v242M531 242v357" stroke="#4aa4f0"/>
    <path d="M979 189l31 10-26 9M1010 199l-1 40" fill="none" stroke="#ff0"/>
    <text class="csys" x="975" y="188">Y</text><text class="csys" x="981" y="209">X</text><text class="csys" x="1008" y="243">Z</text>
    <g stroke="#e0ccff" stroke-width="1.5" stroke-linejoin="round">
      <path d="M1104 87q-16 6-7 15 5 5 12 6z" fill="#000055"/>
      <path d="M1104 87l29 11-25 10q-4-10-4-21z" fill="#155a8c"/>
      <path d="M1133 98l-1 35q-7-1-13-8l-11-17z" fill="#217a8a"/>
      <path d="M1172 82l-27 11q-10 11-6 30 3 17 19 10 12-6 12-15z" fill="#000055"/>
      <path d="M1097 84l60 22" fill="none"/>
      <circle cx="1096" cy="84" r="3" fill="#e0ccff"/>
    </g>
    <path d="M1152 102h10v10h-10z" fill="#d00000"/>
    <text class="yellow" x="1083" y="84">Y</text><text class="yellow" x="1097" y="114">X</text><text class="yellow" x="1127" y="146">Z</text>
    <path d="M100 546l-17-6" stroke="#0abf0a" stroke-width="4"/><path d="M74 535l12-2v11z" fill="#0a8a0a"/>
    <path d="M101 546l-14 4" stroke="#c00" stroke-width="4"/><path d="M78 554l7-9 5 10z" fill="#c00"/>
    <path d="M101 547l-1 20" stroke="#0000b8" stroke-width="4"/><path d="M94 565h12l-6 13z" fill="#000090"/>
    <text class="world" x="58" y="535">Y</text><text class="world" x="64" y="562">X</text><text class="world" x="95" y="594">Z</text>
  </svg>`);

define('status-bar', `
  <style>
    :host { display: flex; align-items: center; justify-content: flex-end; height: 33px; overflow: hidden; background: linear-gradient(#fff, #ebebeb); color: #44555f; }
    span { font: oblique 700 15px/20px "DejaVu Sans", sans-serif; padding-top: 5px; flex: 0 1 76px; white-space: nowrap; }
    svg { flex: none; margin-right: 5px; }
  </style>
  <svg width="24" height="24" viewBox="0 0 24 24" fill="none" stroke="#44555f" stroke-width="2"><path d="M8 2q10-1 7 4-2 3-8 5M6 11q6-1 5 3-2 6-8 7l4-8M23 10q-8-1-7 3 6 2 3 5-2 2-7 1"/></svg>
  <span>SIMULIA</span>`);

define('app-window', `
  <style>
    :host { display: flex; flex-direction: column; width: calc(50vw - 3px); height: 100%; background: linear-gradient(90deg, #fff, #f7f7f7 45%, #efefef 85%); }
    .body { flex: 1; display: grid; grid-template-columns: 265px 1fr; column-gap: 6px; min-height: 0; padding: 0 0 4px 2px; background: linear-gradient(#fff, #fff) bottom / 100% 3px no-repeat; }
    .main { display: grid; grid-template-columns: 62px 1fr; grid-template-rows: 31px 1fr 33px; min-height: 0; }
    context-bar, status-bar { grid-column: 1 / 3; }
    side-panel { margin: 6px 0 1px; }
  </style>
  <title-bar></title-bar>
  <menu-bar></menu-bar>
  <tool-bars></tool-bars>
  <div class="body">
    <side-panel></side-panel>
    <div class="main">
      <context-bar></context-bar>
      <tool-palette></tool-palette>
      <view-port></view-port>
      <status-bar></status-bar>
    </div>
  </div>`);
</script>
</body>
</html>
